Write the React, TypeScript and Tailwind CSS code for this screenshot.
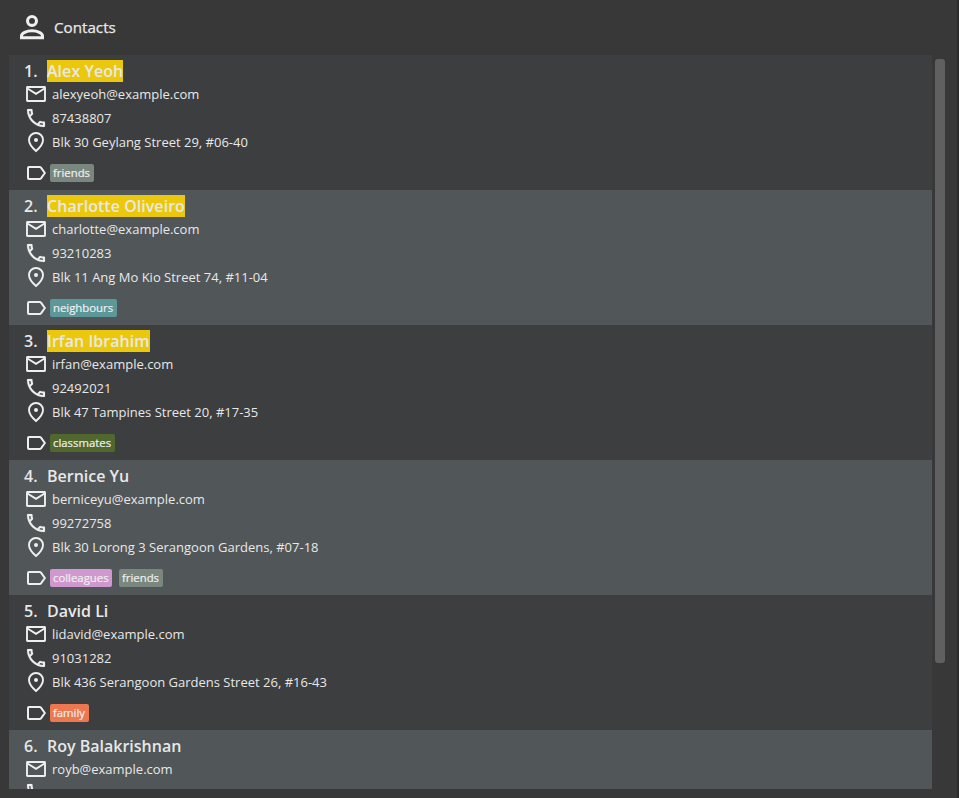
import React from "react";

type Contact = { name: string; email: string; phone: string; address: string; tags: { t: string; c: string }[]; hit?: boolean };

const contacts: Contact[] = [
  { name: "Alex Yeoh", email: "alexyeoh@example.com", phone: "87438807", address: "Blk 30 Geylang Street 29, #06-40", tags: [{ t: "friends", c: "w-[44px] bg-[#7a877e]" }], hit: true },
  { name: "Charlotte Oliveiro", email: "charlotte@example.com", phone: "93210283", address: "Blk 11 Ang Mo Kio Street 74, #11-04", tags: [{ t: "neighbours", c: "w-[67px] bg-[#5c9799]" }], hit: true },
  { name: "Irfan Ibrahim", email: "irfan@example.com", phone: "92492021", address: "Blk 47 Tampines Street 20, #17-35", tags: [{ t: "classmates", c: "w-[65px] bg-[#50682e]" }], hit: true },
  { name: "Bernice Yu", email: "berniceyu@example.com", phone: "99272758", address: "Blk 30 Lorong 3 Serangoon Gardens, #07-18", tags: [{ t: "colleagues", c: "w-[62px] bg-[#cf98ce]" }, { t: "friends", c: "w-[44px] bg-[#7a877e]" }] },
  { name: "David Li", email: "lidavid@example.com", phone: "91031282", address: "Blk 436 Serangoon Gardens Street 26, #16-43", tags: [{ t: "family", c: "w-[39px] bg-[#ed784f]" }] },
  { name: "Roy Balakrishnan", email: "royb@example.com", phone: "", address: "", tags: [] },
];

const icons = {
  mail: <path d="M3.5 5h17a.5.5 0 0 1 .5.5v13a.5.5 0 0 1-.5.5h-17a.5.5 0 0 1-.5-.5v-13a.5.5 0 0 1 .5-.5zM3.5 6.5l8.5 5.3 8.5-5.3" fill="none" strokeWidth="1.9" />,
  phone: <path d="M6.54 5c.06.89.21 1.76.45 2.59l-1.2 1.2c-.41-1.2-.67-2.47-.76-3.79h1.51m9.86 12.02c.85.24 1.72.39 2.6.45v1.49c-1.32-.09-2.59-.35-3.8-.75l1.2-1.19M7.5 3H4c-.55 0-1 .45-1 1 0 9.39 7.61 17 17 17 .55 0 1-.45 1-1v-3.49c0-.55-.45-1-1-1-1.24 0-2.45-.2-3.57-.57-.1-.04-.21-.05-.31-.05-.26 0-.51.1-.71.29l-2.2 2.2c-2.83-1.45-5.15-3.76-6.59-6.59l2.2-2.2c.28-.28.36-.67.25-1.02C8.7 6.45 8.5 5.25 8.5 4c0-.55-.45-1-1-1z" strokeWidth=".15" />,
  pin: <><path d="M12 3C8.1 3 5 6 5 9.9c0 4.3 3.2 7.7 7 11.1 3.8-3.4 7-6.8 7-11.1C19 6 15.9 3 12 3z" fill="none" strokeWidth="1.9" /><circle cx="12" cy="10" r="2" stroke="none" /></>,
  tag: <path d="M5 6h10.6c.6 0 1 .2 1.4.7L20.8 12 17 17.3c-.4.5-.8.7-1.4.7H5c-.6 0-1-.4-1-1V7c0-.6.4-1 1-1z" fill="none" strokeWidth="2" />,
  person: <g fill="none" strokeWidth="2.3"><circle cx="12" cy="6.7" r="3.35" /><path d="M4.15 19.35v-1.5c0-2 3.65-3.8 7.85-3.8s7.85 1.8 7.85 3.8v1.5z" /></g>,
};

function Icon({ name, className = "size-6" }: { name: keyof typeof icons; className?: string }) {
  return <svg viewBox="0 0 24 24" className={`${className} shrink-0 fill-[#efefef] stroke-[#efefef]`}>{icons[name]}</svg>;
}

function Line({ icon, text }: { icon: keyof typeof icons; text: string }) {
  return <div className="flex h-6 items-center gap-1 text-[13px] leading-6"><Icon name={icon} />{text}</div>;
}

export default function App() {
  return (
    <main className="flex h-[798px] w-[959px] flex-col overflow-hidden border-r-2 border-[#2c2c2c] bg-[#383838] font-['Open_Sans',sans-serif] whitespace-nowrap text-[#e8e8e8]">
      <header className="flex h-[55px] shrink-0 items-center gap-1.5 pl-4 text-[15.2px] [-webkit-text-stroke:0.25px]"><Icon name="person" className="size-8" />Contacts</header>
      <div className="flex h-[734px] pl-[9px]">
        <ul className="h-[734px] w-[923px] overflow-hidden">
          {contacts.map((p, i) => (
            <li key={p.name} className={`h-[135px] pt-[5px] pl-[15px] ${i % 2 ? "bg-[#515658]" : "bg-[#3c3e3f]"}`}>
              <div className="flex h-[22px] text-base leading-[22px] font-semibold">
                <span className="w-[23px]">{i + 1}.</span>
                <span className={p.hit ? "bg-[#ecc80c] tracking-[0.04px]" : ""}>{p.name}</span>
              </div>
              <Line icon="mail" text={p.email} />
              <Line icon="phone" text={p.phone} />
              {p.address && <Line icon="pin" text={p.address} />}
              {p.tags.length > 0 && (
                <div className="mt-[7px] flex h-6 items-center">
                  <Icon name="tag" />
                  <div className="ml-0.5 flex gap-[7px]">
                    {p.tags.map((t) => <span key={t.t} className={`h-[18px] rounded-[2px] pl-[3px] text-[11.35px] leading-[18px] text-[#efefef] [-webkit-text-stroke:0.2px] ${t.c}`}>{t.t}</span>)}
                  </div>
                </div>
              )}
            </li>
          ))}
        </ul>
        <div className="mt-1 ml-[3px] h-[604px] w-[10px] rounded-[3px] bg-[#606060]" />
      </div>
    </main>
  );
}
